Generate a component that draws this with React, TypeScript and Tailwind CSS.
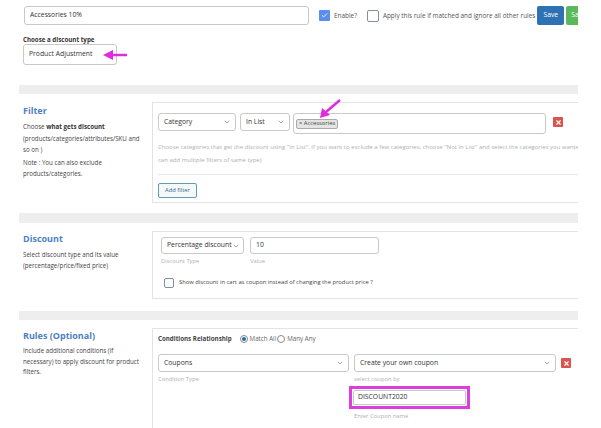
import { ChevronDown, Check, X } from "lucide-react"

const font = { fontFamily: '"Open Sans", "Noto Sans", sans-serif' }

const Select = ({ label, className }: { label: string; className: string }) => (
    <div className={`flex items-center justify-between border border-[#c9c9c9] rounded-[3px] bg-white pl-[5px] pr-[4px] text-[#333] ${className}`}>
        <span className="whitespace-nowrap">{label}</span>
        <ChevronDown className="w-[8px] h-[8px] shrink-0 text-[#777]" strokeWidth={2} />
    </div>
)

const RemoveButton = ({ className }: { className: string }) => (
    <div className={`flex items-center justify-center w-[10px] h-[10px] rounded-[1px] bg-[#d9534f] ${className}`}>
        <X className="w-[7px] h-[7px] text-white" strokeWidth={4} />
    </div>
)

const App = () => {
    return (
        <div className="relative w-[601px] h-[428px] overflow-hidden bg-white text-[6.2px] text-[#444]" style={font}>
            <div className="ml-[19px] w-[559px] overflow-hidden">
                {/* top bar */}
                <div className="flex items-center pt-[6px] pl-[5px] whitespace-nowrap">
                    <div className="shrink-0 flex items-center w-[285px] h-[19px] border border-[#c9c9c9] rounded-[3px] pl-[5px] text-[6.8px] text-[#333]">Accessories 10%</div>
                    <div className="shrink-0 ml-[10px] flex items-center justify-center w-[11px] h-[11px] rounded-[1px] bg-[#5b8def]">
                        <Check className="w-[7px] h-[7px] text-white" strokeWidth={3} />
                    </div>
                    <span className="shrink-0 ml-[4px] text-[#555] text-[6.4px]">Enable?</span>
                    <div className="shrink-0 ml-[10px] w-[12px] h-[12px] rounded-[2px] border border-[#7e8fa8]"></div>
                    <span className="shrink-0 ml-[4px] text-[#555] text-[6.4px]">Apply this rule if matched and ignore all other rules</span>
                    <div className="ml-[2px] flex items-center justify-center w-[27px] h-[19px] shrink-0 rounded-[2px] bg-[#2f72b3] text-white text-[6.8px]">Save</div>
                    <div className="ml-[2px] flex items-center pl-[5px] w-[30px] h-[19px] shrink-0 rounded-[2px] bg-[#5cb85c] text-white text-[6.8px]">Save &amp; Close</div>
                </div>

                <div className="pl-[4px] mt-[11px]">
                    <div className="font-bold text-[#333] leading-[8px]">Choose a discount type</div>
                    <div className="flex items-center w-[94px] h-[21px] border border-[#c9c9c9] rounded-[3px] pl-[5px] text-[6.8px] text-[#333]">Product Adjustment</div>
                </div>

                <div className="mt-[20px] h-[9px] bg-[#eeeeee]"></div>

                {/* Filter */}
                <div className="flex mt-[8px]">
                    <div className="w-[133px] shrink-0 pl-[4px] pt-[2px]">
                        <div className="text-[9px] font-bold text-[#4d7fc4] leading-[14px]">Filter</div>
                        <div className="mt-[3px] leading-[11.5px] w-[122px]">Choose <b className="text-[#333]">what gets discount</b> (products/categories/attributes/SKU and so on )</div>
                        <div className="mt-[1px] leading-[11.5px] w-[122px]">Note : You can also exclude products/categories.</div>
                    </div>
                    <div className="flex-1 h-[101px] border-l border-t border-b border-[#e3e3e3] pl-[5px] pt-[10px] overflow-hidden">
                        <div className="flex items-start text-[6.8px]">
                            <Select label="Category" className="w-[78px] h-[18px] shrink-0" />
                            <Select label="In List" className="ml-[4px] w-[50px] h-[18px] shrink-0" />
                            <div className="ml-[3px] w-[253px] h-[21px] shrink-0 border border-[#c9c9c9] rounded-[3px] flex items-center pl-[2px]">
                                <span className="h-[10px] px-[2px] flex items-center border border-[#aaa] rounded-[2px] bg-[#e4e4e4] text-[5.8px] text-[#444]">× Accessories</span>
                            </div>
                            <RemoveButton className="ml-[7px] mt-[4px] shrink-0" />
                        </div>
                        <div className="mt-[7px] leading-[13px] text-[6px] text-[#b0b0b0]">
                            <div className="whitespace-nowrap">Choose categories that get the discount using "In List". If you want to exclude a few categories, choose "Not In List" and select the categories you wanted to exclude. (You</div>
                            <div>can add multiple filters of same type)</div>
                        </div>
                        <div className="mt-[7px] border-t border-[#e8e8e8]"></div>
                        <div className="mt-[8px] flex items-center justify-center w-[39px] h-[15px] border border-[#5f9cb5] rounded-[2px] bg-[#f6f7f7] text-[#2c6a8a] text-[5.8px]">Add filter</div>
                    </div>
                </div>

                <div className="mt-[10px] h-[10px] bg-[#eeeeee]"></div>

                {/* Discount */}
                <div className="flex mt-[8px]">
                    <div className="w-[133px] shrink-0 pl-[4px] pt-[1px]">
                        <div className="text-[9px] font-bold text-[#4d7fc4] leading-[14px]">Discount</div>
                        <div className="mt-[3px] leading-[11px] w-[122px]">Select discount type and its value (percentage/price/fixed price)</div>
                    </div>
                    <div className="flex-1 h-[68px] border-l border-t border-b border-[#e3e3e3] pl-[8px] pt-[5px] overflow-hidden">
                        <div className="flex text-[6.8px]">
                            <div>
                                <Select label="Percentage discount" className="w-[83px] h-[17px]" />
                                <div className="mt-[3px] text-[5.8px] text-[#b0b0b0]">Discount Type</div>
                            </div>
                            <div className="ml-[6px]">
                                <div className="w-[129px] h-[17px] border border-[#c9c9c9] rounded-[3px] pl-[5px] flex items-center text-[#333]">10</div>
                                <div className="mt-[3px] text-[5.8px] text-[#b0b0b0]">Value</div>
                            </div>
                        </div>
                        <div className="mt-[12px] ml-[3px] flex items-center">
                            <div className="w-[10px] h-[10px] rounded-[2px] border border-[#7e8fa8]"></div>
                            <span className="ml-[5px] text-[5.8px]">Show discount in cart as coupon instead of changing the product price ?</span>
                        </div>
                    </div>
                </div>

                <div className="mt-[12px] h-[9px] bg-[#eeeeee]"></div>

                {/* Rules */}
                <div className="flex mt-[8px]">
                    <div className="w-[133px] shrink-0 pl-[4px] pt-[1px]">
                        <div className="text-[9px] font-bold text-[#4d7fc4] leading-[14px]">Rules (Optional)</div>
                        <div className="mt-[3px] leading-[10.5px] whitespace-nowrap">
                            <div>Include additional conditions (if</div>
                            <div>necessary) to apply discount for product</div>
                            <div>filters.</div>
                        </div>
                    </div>
                    <div className="flex-1 h-[110px] border-l border-t border-[#e3e3e3] pl-[5px] pt-[5px]">
                        <div className="flex items-center h-[10px]">
                            <span className="font-bold text-[#444]">Conditions Relationship</span>
                            <div className="ml-[8px] w-[8px] h-[8px] rounded-full border border-[#888] flex items-center justify-center">
                                <div className="w-[4px] h-[4px] rounded-full bg-[#1f6f99]"></div>
                            </div>
                            <span className="ml-[2px] text-[#666]">Match All</span>
                            <div className="ml-[1px] w-[8px] h-[8px] rounded-full border border-[#888]"></div>
                            <span className="ml-[2px] text-[#666]">Many Any</span>
                        </div>
                        <div className="mt-[10px] flex items-start text-[6.8px]">
                            <div>
                                <Select label="Coupons" className="w-[191px] h-[18px]" />
                                <div className="mt-[3px] text-[5.8px] text-[#b0b0b0]">Condition Type</div>
                            </div>
                            <div className="ml-[5px]">
                                <Select label="Create your own coupon" className="w-[202px] h-[18px]" />
                                <div className="mt-[3px] text-[5.8px] text-[#b0b0b0]">select coupon by</div>
                                <div className="-ml-[5px] mt-[2px] w-[121px] border-[3px] border-[#dd3ddd] p-[1px]">
                                    <div className="h-[15px] border border-[#c9c9c9] rounded-[2px] pl-[4px] flex items-center text-[#333]">DISCOUNT2020</div>
                                </div>
                                <div className="mt-[3px] text-[5.8px] text-[#b0b0b0]">Enter Coupon name</div>
                            </div>
                            <RemoveButton className="ml-[5px] mt-[4px] shrink-0" />
                        </div>
                    </div>
                </div>
            </div>

            {/* annotation arrows */}
            <svg className="absolute left-0 top-0 pointer-events-none" width="601" height="428">
                <line x1="127" y1="55" x2="110" y2="55" stroke="#e02be0" strokeWidth="2.5" />
                <polygon points="103,55 113,50 113,60" fill="#e02be0" />
                <line x1="340" y1="100" x2="326" y2="112" stroke="#e02be0" strokeWidth="2.5" />
                <polygon points="320,118 322,108 330,115" fill="#e02be0" />
            </svg>
        </div>
    )
}

export default App
